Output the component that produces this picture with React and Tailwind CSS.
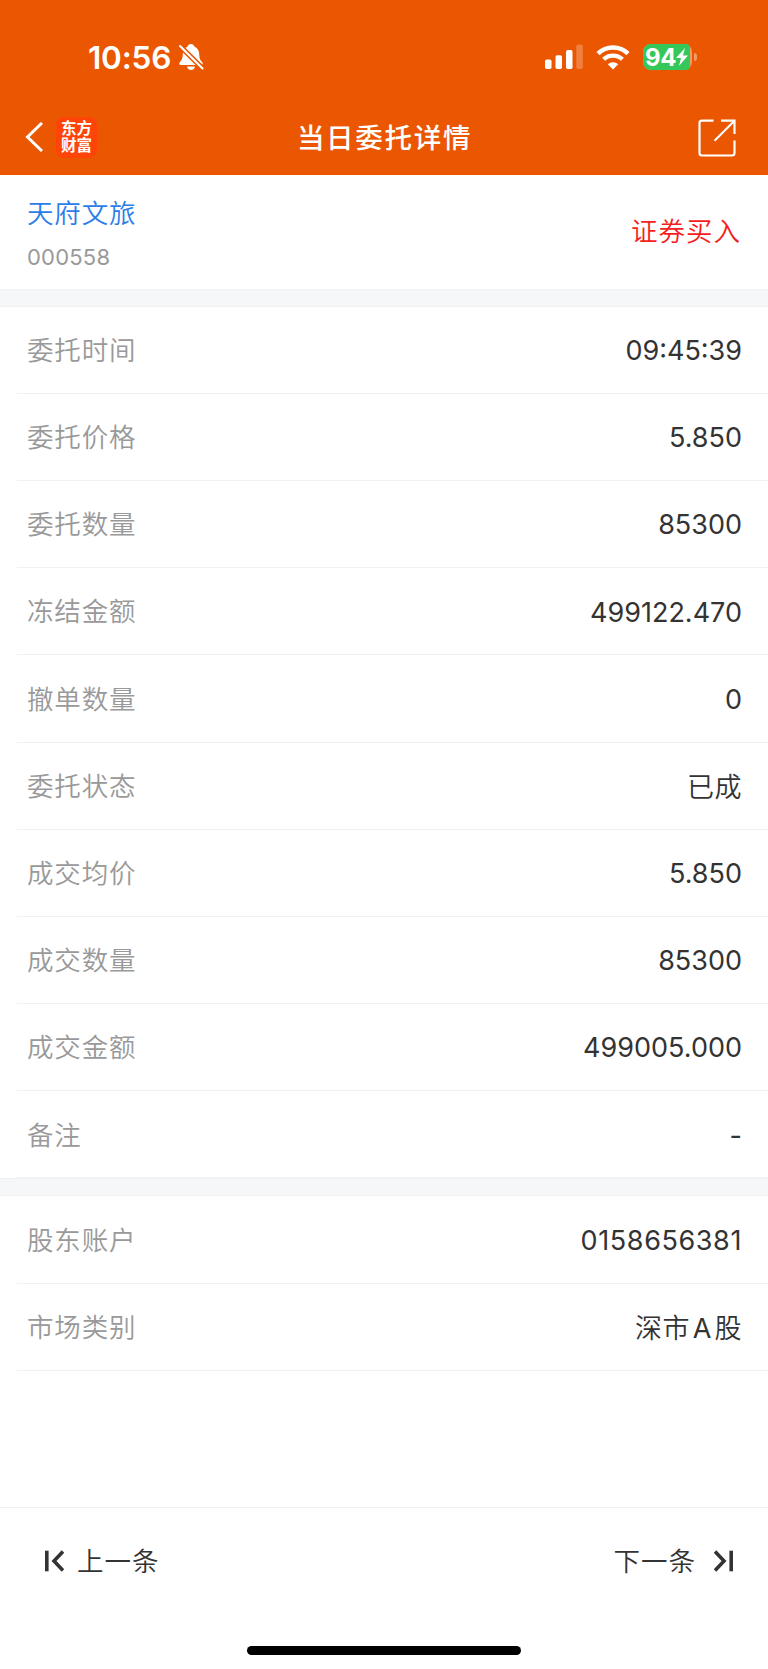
const orderRows = [
  { label: '委托时间', value: '09:45:39' },
  { label: '委托价格', value: '5.850' },
  { label: '委托数量', value: '85300' },
  { label: '冻结金额', value: '499122.470' },
  { label: '撤单数量', value: '0' },
  { label: '委托状态', value: '已成', valueClass: 'tracking-[0.500px] pt-[3px]' },
  { label: '成交均价', value: '5.850' },
  { label: '成交数量', value: '85300' },
  { label: '成交金额', value: '499005.000' },
  { label: '备注', value: '-' },
]

const accountRows = [
  { label: '股东账户', value: '0158656381', valueClass: 'font-normal tracking-[0.600px] pt-px' },
  {
    label: '市场类别',
    value: <>深市<span className="mx-[2.500px] font-normal">A</span>股</>,
    valueClass: 'tracking-[0.600px] pt-[2px]',
  },
]

const BellOffIcon = () => (
  <svg viewBox="0 0 26 28" className="w-[26px] h-7" fill="none">
    <path
      d="M13 1c-1.900 0-3 1.100-3.300 2.400C6.500 4.700 4.900 7.500 4.800 11c-.1 4.600-1.200 6.500-3 8.200-1 1.100-.7 2.800 1 2.800h20.400c1.700 0 2-1.700 1-2.800-1.800-1.700-2.900-3.600-3-8.200-.1-3.500-1.700-6.300-4.900-7.600C16 2.100 14.900 1 13 1Z"
      fill="white"
    />
    <path d="M9 23.500h8c-.4 2-1.900 3.500-4 3.500s-3.600-1.500-4-3.500Z" fill="white" />
    <path d="M2 3 24.500 25.500" stroke="#eb5600" strokeWidth="5.200" />
    <path d="M2 3 24.500 25.500" stroke="white" strokeWidth="2.100" strokeLinecap="round" />
  </svg>
)

const SignalIcon = () => (
  <svg viewBox="0 0 38 26" className="w-[38px] h-[26px]" fill="white">
    <rect x="0" y="15.500" width="6.500" height="9.500" rx="1.700" />
    <rect x="10.500" y="11.300" width="6.500" height="13.700" rx="1.700" />
    <rect x="21" y="6" width="6.500" height="19" rx="1.700" />
    <rect x="31.300" y="0.500" width="6.500" height="24.500" rx="1.700" opacity="0.250" />
  </svg>
)

const WifiIcon = () => (
  <svg viewBox="0 0 34 25" className="w-[34px] h-[25px]" fill="none" stroke="white">
    <path d="M2 8.700a21.500 21.500 0 0 1 30 0" strokeWidth="4.500" />
    <path d="M7.600 14.300a13.600 13.600 0 0 1 18.800 0" strokeWidth="4.300" />
    <path d="M17 24.500l-5.200-5.300a7.600 7.600 0 0 1 10.400 0Z" fill="white" stroke="none" />
  </svg>
)

const BatteryIcon = () => (
  <div className="flex items-center gap-[2px]">
    <div className="w-[49px] h-[26px] rounded-[8px] bg-[#f39a66]">
      <div className="flex items-center justify-center w-[47px] h-full rounded-l-[8px] rounded-r-[4px] bg-[#34c759]">
        <span className="pt-px text-[24px] font-bold leading-[26px] tracking-[-0.300px]">94</span>
        <svg viewBox="0 0 12 18" className="w-3 h-[18px]" fill="white">
          <path d="M9 0 0 10h5L3 18l9-10.500H7Z" />
        </svg>
      </div>
    </div>
    <div className="w-[3px] h-2 rounded-r-full bg-[#f39a66]" />
  </div>
)

const ShareIcon = () => (
  <svg viewBox="0 0 38 38" className="w-[38px] h-[38px]" fill="none" stroke="white" strokeWidth="2.200">
    <path d="M15.500 1.700H4a2.500 2.500 0 0 0-2.500 2.500V34A2.500 2.500 0 0 0 4 36.500h30a2.500 2.500 0 0 0 2.500-2.500V21.500" />
    <path d="M23 1.700h13.500V15" />
    <path d="M36 2.200 16.500 21.700" />
  </svg>
)

const StepIcon = ({ className }) => (
  <svg viewBox="0 0 20 22" className={`w-5 h-[22px] ${className}`} fill="none" stroke="#333" strokeWidth="3.600">
    <path d="M2.800 .7v20.600" />
    <path d="M19 1.500 10 11l9 9.500" />
  </svg>
)

const DetailRow = ({ label, value, valueClass = 'font-normal pt-px' }) => (
  <div className="flex items-center justify-between h-[87.200px] ml-[17px] pl-[10px] pr-[26px] pt-[2px] border-b border-[#f1f1f3]">
    <span className="text-[26.500px] tracking-[0.850px] text-[#999]">{label}</span>
    <span className={`text-[27px] text-[#333] ${valueClass}`}>{value}</span>
  </div>
)

const Divider = () => (
  <div className="h-[18px] shrink-0 bg-[#f6f7f9] border-y border-[#f0f1f3]" />
)

export default function App() {
  return (
    <div className="flex flex-col w-[768px] h-[1669px] bg-white overflow-hidden font-[350] font-['Inter','Noto_Sans_CJK_SC',sans-serif]">
      <header className="h-[175px] shrink-0 bg-[#eb5600] text-white">
        {/* Status bar */}
        <div className="flex items-center justify-between h-[114px] pl-[88px] pr-[71px]">
          <div className="flex items-center gap-[7px]">
            <span className="pt-px text-[31.500px] font-semibold leading-none tracking-[-0.200px]">10:56</span>
            <BellOffIcon />
          </div>
          <div className="flex items-center">
            <SignalIcon />
            <div className="mx-[13px]"><WifiIcon /></div>
            <BatteryIcon />
          </div>
        </div>

        {/* Navigation */}
        <div className="grid grid-cols-[1fr_auto_1fr] items-center h-[46px] pl-[25px] pr-[32px]">
          <div className="flex items-center gap-[13px]">
            <svg viewBox="0 0 18 30" className="w-[18px] h-[30px]" fill="none" stroke="white" strokeWidth="3">
              <path d="M17 1 2.500 15 17 29" />
            </svg>
            <div className="flex flex-col items-center justify-center w-[41px] h-[41px] rounded-[8px] bg-[#ff4408] text-[15.500px] font-bold leading-[17px]">
              <span>东方</span>
              <span>财富</span>
            </div>
          </div>
          <h1 className="pl-2 pt-[3px] text-center text-[27.500px] font-medium tracking-[1.700px] whitespace-nowrap">当日委托详情</h1>
          <div className="flex justify-end pt-px">
            <ShareIcon />
          </div>
        </div>
      </header>

      {/* Security */}
      <section className="flex items-center justify-between h-[113.600px] shrink-0 px-[27px]">
        <div className="flex flex-col pt-[2px]">
          <span className="text-[26.500px] leading-[38px] tracking-[0.850px] text-[#2b7de9]">天府文旅</span>
          <span className="mt-[11px] text-[22px] font-normal leading-7 tracking-[0.200px] text-[#999]">000558</span>
        </div>
        <span className="text-[26.500px] tracking-[1px] text-[#f51d20]">证券买入</span>
      </section>

      <Divider />
      <section>
        {orderRows.map((row) => <DetailRow key={row.label} {...row} />)}
      </section>
      <Divider />
      <section>
        {accountRows.map((row) => <DetailRow key={row.label} {...row} />)}
      </section>

      <footer className="flex flex-col items-center justify-between mt-auto h-[162px] shrink-0 border-t border-[#f0f0f0]">
        <div className="flex items-center justify-between w-full h-[106px] pl-[44px] pr-[34px] text-[26.500px] text-[#333]">
          <button className="flex items-center gap-[13px]">
            <StepIcon className="" />
            <span className="pt-[2px] tracking-[1px]">上一条</span>
          </button>
          <button className="flex items-center gap-[18px]">
            <span className="pt-[2px] tracking-[1px]">下一条</span>
            <StepIcon className="rotate-180" />
          </button>
        </div>
        <div className="w-[274px] h-[9px] mb-[14px] rounded-full bg-black" />
      </footer>
    </div>
  )
}
